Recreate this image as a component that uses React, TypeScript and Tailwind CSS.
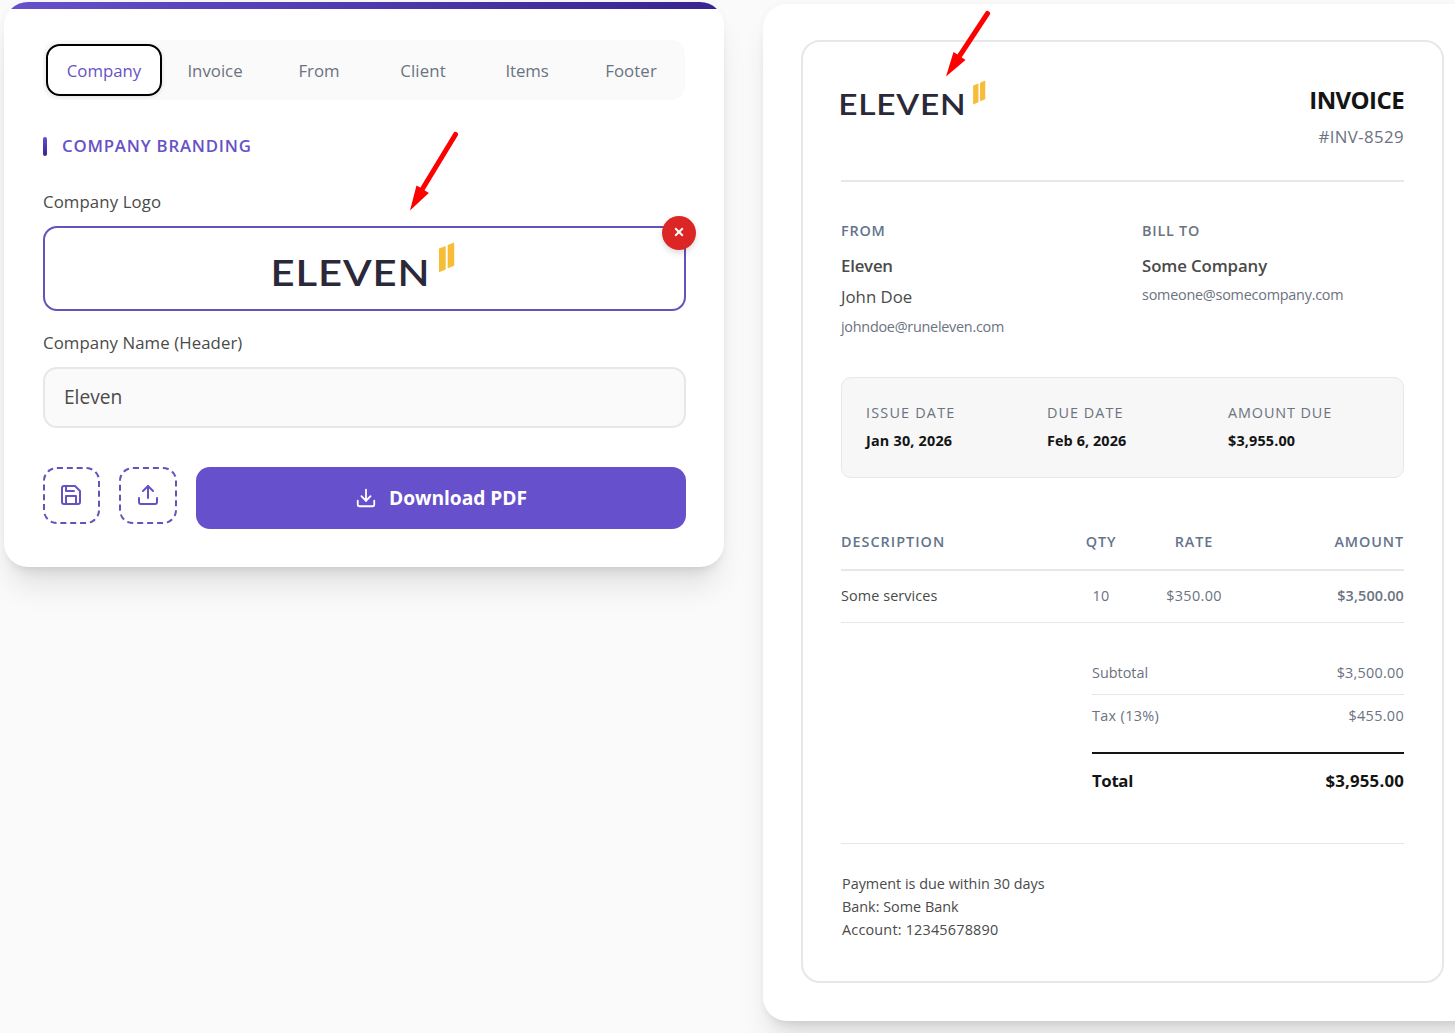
import { clsx } from "clsx";

const tabs = [
  { label: "Company", spacing: "tracking-normal" },
  { label: "Invoice", spacing: "tracking-normal" },
  { label: "From", spacing: "tracking-normal" },
  { label: "Client", spacing: "tracking-[0.15px]" },
  { label: "Items", spacing: "tracking-[-0.1px]" },
  { label: "Footer", spacing: "tracking-[0.1px]" },
];

const meta = [
  { label: "ISSUE DATE", value: "Jan 30, 2026", labelSpacing: "tracking-[1.2px]", valueSpacing: "tracking-[0.2px]" },
  { label: "DUE DATE", value: "Feb 6, 2026", labelSpacing: "tracking-[1.05px]", valueSpacing: "tracking-[0.1px]" },
  { label: "AMOUNT DUE", value: "$3,955.00", labelSpacing: "tracking-[0.9px]", valueSpacing: "tracking-[0.15px]" },
];

function ElevenLogo({ className }: { className?: string }) {
  return (
    <svg viewBox="0 0 181 45" className={clsx("overflow-visible", className)} role="img">
      <text
        x="-3.5"
        y="43"
        textLength="160"
        lengthAdjust="spacingAndGlyphs"
        fontFamily="Lato, sans-serif"
        fontSize="36.5"
        fontWeight="600"
        letterSpacing="0.8"
        fill="#2a2839"
      >
        ELEVEN
      </text>
      <path d="M165 5.5 171.7 3V26.5L165 29.3Z" fill="#f7bd36" />
      <path d="M173.7 2.1 180.2 -0.5V22.7L173.7 25.2Z" fill="#f7bd36" />
    </svg>
  );
}

function SaveIcon() {
  return (
    <svg width="24" height="24" viewBox="0 0 24 24" fill="none" stroke="currentColor" strokeWidth="2" strokeLinecap="round" strokeLinejoin="round">
      <path d="M19 21H5a2 2 0 0 1-2-2V5a2 2 0 0 1 2-2h11l5 5v11a2 2 0 0 1-2 2z" />
      <polyline points="17 21 17 13 7 13 7 21" />
      <polyline points="7 3 7 8 15 8" />
    </svg>
  );
}

function UploadIcon() {
  return (
    <svg width="24" height="24" viewBox="0 0 24 24" fill="none" stroke="currentColor" strokeWidth="2" strokeLinecap="round" strokeLinejoin="round">
      <path d="M21 15v4a2 2 0 0 1-2 2H5a2 2 0 0 1-2-2v-4" />
      <polyline points="17 8 12 3 7 8" />
      <line x1="12" y1="3" x2="12" y2="15" />
    </svg>
  );
}

function DownloadIcon() {
  return (
    <svg width="22" height="22" viewBox="0 0 24 24" fill="none" stroke="currentColor" strokeWidth="2" strokeLinecap="round" strokeLinejoin="round">
      <path d="M21 15v4a2 2 0 0 1-2 2H5a2 2 0 0 1-2-2v-4" />
      <polyline points="7 10 12 15 17 10" />
      <line x1="12" y1="15" x2="12" y2="3" />
    </svg>
  );
}

function EditorPanel() {
  return (
    <div className="mt-[2px] h-[565px] w-[720px] shrink-0 overflow-hidden rounded-3xl bg-white shadow-[0_24px_30px_-6px_rgba(0,0,0,0.1),0_10px_12px_-7px_rgba(0,0,0,0.1),0_0_10px_rgba(0,0,0,0.03)]">
      <div className="h-[7px] bg-gradient-to-r from-[#6750cb] to-[#38238f]" />

      <div className="pr-[38px] pl-[39px]">
        <div className="mt-[31px] flex h-[60px] w-[642px] items-center gap-1 rounded-[14px] bg-[#fafafa] pl-[3px]">
          {tabs.map((tab, i) => (
            <button
              key={tab.label}
              className={clsx(
                "h-[52px] rounded-[14px] pt-[2px] text-[16.8px] font-medium",
                tab.spacing,
                i === 0
                  ? "-mr-px w-[116px] border-2 border-black bg-white text-[#6652c4] shadow-[0_1px_4px_rgba(0,0,0,0.1)]"
                  : "w-[100px] text-[#6b7280]"
              )}
            >
              {tab.label}
            </button>
          ))}
        </div>

        <div className="mt-[34px] flex h-6 items-center">
          <span className="h-[19px] w-1 rounded-[2px] bg-gradient-to-b from-[#6750cb] to-[#38238f]" />
          <h2 className="ml-[15px] text-[16.8px] font-semibold tracking-[0.8px] text-[#6652c4]">COMPANY BRANDING</h2>
        </div>

        <label className="mt-8 block text-[16.8px] leading-6 font-medium tracking-[0.1px] text-[#4a4a4a]">Company Logo</label>
        <div className="relative mt-3 flex h-[85px] items-center justify-center rounded-[14px] border-2 border-[#6652b8] bg-white">
          <ElevenLogo className="-mt-[7px] h-[45px] w-[181px]" />
          <button className="absolute -top-3 -right-3 flex h-[34px] w-[34px] items-center justify-center rounded-full bg-[#dc2626] text-white shadow-[0_3px_6px_rgba(0,0,0,0.15)]">
            <svg width="10" height="10" viewBox="0 0 10 10" stroke="currentColor" strokeWidth="2" className="-mt-[2px]">
              <path d="M1.2 1.2 8.8 8.8M8.8 1.2 1.2 8.8" />
            </svg>
          </button>
        </div>

        <label className="mt-5 block text-[16.8px] leading-6 font-medium tracking-[0.08px] text-[#4a4a4a]">Company Name (Header)</label>
        <div className="mt-3 flex h-[61px] items-center rounded-[14px] border-2 border-[#e5e7e9] bg-[#fafafa] px-[19px] text-[19.2px] tracking-[-0.05px] text-[#4a4a4a]">
          Eleven
        </div>

        <div className="mt-[39px] flex items-start gap-[19px] text-[#6652c4]">
          <button className="flex h-[57px] w-[57px] shrink-0 items-center justify-center rounded-[14px] border-2 border-dashed border-[#6652b8] pr-px pb-px">
            <SaveIcon />
          </button>
          <button className="flex h-[57px] w-[58px] shrink-0 items-center justify-center rounded-[14px] border-2 border-dashed border-[#6652b8] pb-px">
            <UploadIcon />
          </button>
          <button className="flex h-[62px] flex-1 items-center justify-center gap-3 rounded-[14px] bg-[#6750cb] text-[19.2px] font-bold text-white">
            <DownloadIcon />
            <span className="tracking-[-0.05px]">Download PDF</span>
          </button>
        </div>
      </div>
    </div>
  );
}

function InvoicePreview() {
  return (
    <div className="mt-1 h-[1017px] w-[719px] shrink-0 rounded-3xl bg-white pt-9 pl-[38px] shadow-[0_24px_30px_-6px_rgba(0,0,0,0.1),0_10px_12px_-7px_rgba(0,0,0,0.1),0_0_10px_rgba(0,0,0,0.03)]">
      <div className="h-[943px] w-[643px] rounded-[19px] border-2 border-[#e5e7e9] px-[38px]">
        <div className="flex h-[140px] justify-between border-b-2 border-[#e5e7e9]">
          <ElevenLogo className="mt-[39px] h-[36px] w-[145px]" />
          <div className="pt-10 text-right">
            <h1 className="text-2xl leading-9 font-bold tracking-[-0.6px] text-[#141414]">INVOICE</h1>
            <p className="mt-px text-[16.8px] leading-9 tracking-[0.4px] text-[#6b7280]">#INV-8529</p>
          </div>
        </div>

        <div className="mt-[37px] flex h-[123px]">
          <div className="w-[301px]">
            <h3 className="text-[14.4px] leading-6 font-semibold tracking-[0.8px] text-[#64748b]">FROM</h3>
            <p className="mt-[7px] text-[16.8px] leading-8 font-semibold tracking-[-0.2px] text-[#4a4a4a]">Eleven</p>
            <p className="text-[16.8px] leading-[30px] text-[#4a4a4a]">John Doe</p>
            <p className="text-[14.4px] leading-[30px] tracking-[-0.26px] text-[#6b7280]">johndoe@runeleven.com</p>
          </div>
          <div>
            <h3 className="text-[14.4px] leading-6 font-semibold tracking-[0.75px] text-[#6b7280]">BILL TO</h3>
            <p className="mt-[7px] text-[16.8px] leading-8 font-semibold tracking-[-0.1px] text-[#4a4a4a]">Some Company</p>
            <p className="text-[14.4px] leading-[26px] tracking-[-0.23px] text-[#6b7280]">someone@somecompany.com</p>
          </div>
        </div>

        <div className="mt-[35px] grid h-[101px] grid-cols-[181px_181px_1fr] rounded-[10px] border border-[#e5e7e9] bg-[#f7f7f7] pt-[21px] pl-6">
          {meta.map((item) => (
            <div key={item.label}>
              <p className={clsx("text-[14.4px] leading-7 font-medium text-[#6b7280]", item.labelSpacing)}>{item.label}</p>
              <p className={clsx("text-[14.4px] leading-7 font-bold text-[#141414]", item.valueSpacing)}>{item.value}</p>
            </div>
          ))}
        </div>

        <div className="mt-[52px] grid h-[41px] grid-cols-[214px_92px_94px_1fr] border-b-2 border-[#e5e7e9] text-[14.4px] leading-6 font-semibold tracking-[0.9px] text-[#64748b]">
          <span className="tracking-[1px]">DESCRIPTION</span>
          <span className="text-center">QTY</span>
          <span className="text-center">RATE</span>
          <span className="text-right">AMOUNT</span>
        </div>
        <div className="grid h-[52px] grid-cols-[214px_92px_94px_1fr] border-b border-[#e5e7e9] pt-[13px] text-[14.4px] leading-6 text-[#6b7280]">
          <span className="font-medium tracking-[0.1px] text-[#4a4a4a]">Some services</span>
          <span className="text-center tracking-[0.2px]">10</span>
          <span className="text-center tracking-[0.35px]">$350.00</span>
          <span className="text-right font-semibold tracking-[0.15px]">$3,500.00</span>
        </div>

        <div className="mt-[38px] ml-auto w-[312px] text-[14.4px] leading-6 text-[#6b7280]">
          <div className="flex h-[34px] justify-between border-b border-[#e5e7e9]">
            <span>Subtotal</span>
            <span className="tracking-[0.25px]">$3,500.00</span>
          </div>
          <div className="mt-[9px] flex justify-between">
            <span className="tracking-[0.35px]">Tax (13%)</span>
            <span className="tracking-[0.35px]">$455.00</span>
          </div>
          <div className="mt-6 flex border-t-2 border-[#141414] pt-[13px] text-[16.8px] leading-7 font-bold text-[#141414]">
            <span className="tracking-[-0.35px]">Total</span>
            <span className="ml-auto tracking-[0.2px]">$3,955.00</span>
          </div>
        </div>

        <div className="mt-12 border-t border-[#e5e7e9] pt-7 pl-px text-[14.4px] leading-[23px] text-[#4a4a4a]">
          <p>Payment is due within 30 days</p>
          <p>Bank: Some Bank</p>
          <p className="tracking-[0.2px]">Account: 12345678890</p>
        </div>
      </div>
    </div>
  );
}

// Red callout arrows pointing at both logos
function Arrows() {
  return (
    <>
      <svg className="pointer-events-none absolute top-[130px] left-[406px]" width="56" height="84" viewBox="406 130 56 84">
        <path d="M455.5 134.5 423 188" stroke="#ff0000" strokeWidth="5" strokeLinecap="round" />
        <path d="M410 210.5 416.5 185.5 422 188.5 428.8 193Z" fill="#ff0000" />
      </svg>
      <svg className="pointer-events-none absolute top-[8px] left-[942px]" width="52" height="72" viewBox="942 8 52 72">
        <path d="M987.5 13.5 959.5 56" stroke="#ff0000" strokeWidth="5" strokeLinecap="round" />
        <path d="M946 76.5 953.5 52 959 55.5 965.5 60Z" fill="#ff0000" />
      </svg>
    </>
  );
}

export default function App() {
  return (
    <div className="relative flex h-[1033px] w-[1455px] items-start gap-[39px] overflow-hidden bg-[#fafafa] pl-1 font-['Open_Sans',sans-serif]">
      <EditorPanel />
      <InvoicePreview />
      <Arrows />
    </div>
  );
}
